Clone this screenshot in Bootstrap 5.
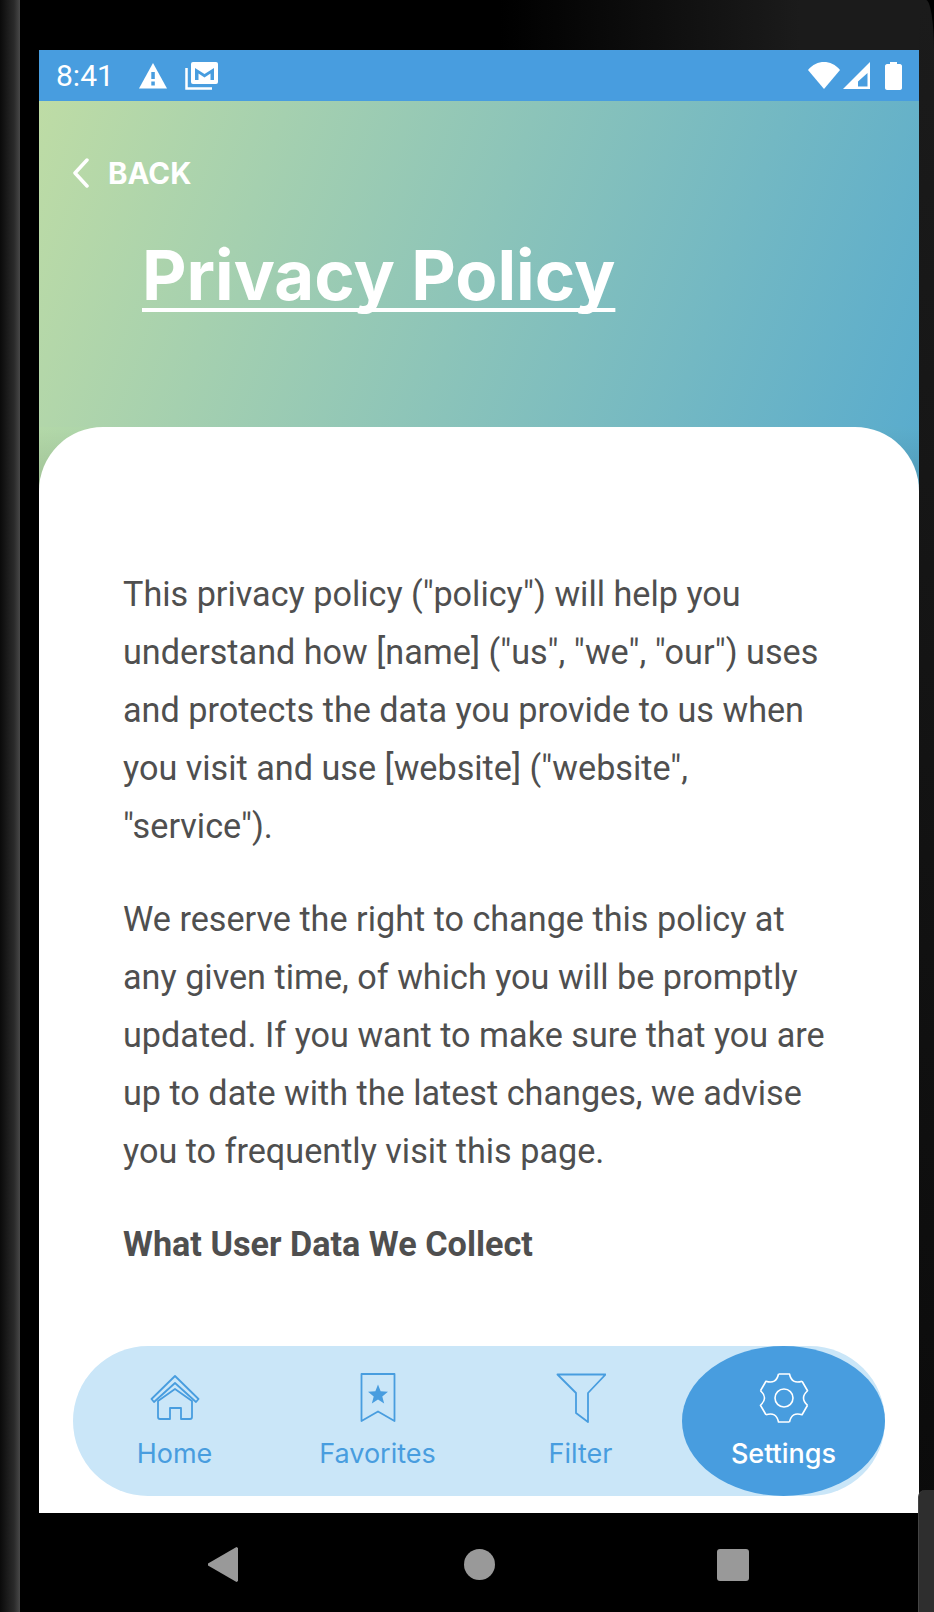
<!DOCTYPE html>
<html lang="en">
<head>
    <meta charset="UTF-8">
    <meta name="viewport" content="width=device-width, initial-scale=1.0">
    <link href="https://cdn.jsdelivr.net/npm/bootstrap@5.3.2/dist/css/bootstrap.min.css" rel="stylesheet">
    <title>Privacy Policy</title>
    <style>
        html, body { height: 100%; margin: 0; background: #000; overflow: hidden; }
        .phone-frame {
            position: relative; width: 934px; height: 1612px; padding-left: 20px;
            background: linear-gradient(90deg, #0a0a0a 0, #2a2a2a 14px, #484848 20px, #000 20px);
        }
        .phone-inner {
            width: 914px; height: 1612px; padding: 50px 15px 0 19px;
            border-radius: 6px 8px 0 0 / 50px 50px 0 0;
            background:
                linear-gradient(#000, #000) left bottom / 100% 99px no-repeat,
                linear-gradient(#1b1b1b, #0a0a0a) right top / 15px 100% no-repeat,
                linear-gradient(90deg, #000 480px, #1b1b1b 780px);
        }
        .side-button {
            position: absolute; right: 0; top: 1490px; width: 16px; height: 122px;
            background: #2e2e2e; border-left: 1px solid #444; border-radius: 7px 0 0 0;
        }
        .app-screen {
            width: 880px; height: 1463px;
            background:
                linear-gradient(180deg, rgba(0,0,0,0) 378px, rgba(0,0,0,.13) 450px),
                linear-gradient(90deg, #b3d8a8, #5aaccc);
        }
        .status-row { height: 51px; background: #489ddf; color: #fff; padding: 0 17px; font: 400 30px Roboto, sans-serif; }
        .status-warn { margin-left: 25px; }
        .status-mail { margin-left: 18px; }
        .status-signal { margin-left: 3px; }
        .status-battery { margin-left: 15px; }
        .top-area {
            height: 326px; padding: 54px 33px 0;
            background: linear-gradient(110deg, #bedca5, #5aaccd);
        }
        .back-link { color: #fff; font: 700 29.5px Inter, sans-serif; text-decoration: none; gap: 18px; }
        .back-link:hover { color: #fff; }
        .page-title {
            color: #fff; font: 700 68.8px/1 Inter, sans-serif; margin: 50px 0 0 70px;
            text-decoration: underline; text-decoration-thickness: 4px; text-underline-offset: 8px; text-decoration-skip-ink: none;
        }
        .sheet { height: 1086px; background: #fff; border-radius: 64px 64px 0 0; padding: 138px 34px 17px; }
        .policy-text { color: #4f4f4f; font: 400 34.2px/58px Roboto, sans-serif; margin: 0 50px 35px; }
        .policy-head { font-weight: 700; }
        .tab-pill { height: 150px; width: 812px; background: #cae6f8; border-radius: 75px; }
        .tab-item { width: 203px; height: 150px; color: #489ddf; font: 400 27px/34px Inter, sans-serif; border-radius: 50%; padding-top: 27px; }
        .tab-icon { height: 50px; margin-bottom: 14px; }
        .tab-icon svg { display: block; }
        .tab-active { background: #489ddf; color: #fff; font-weight: 500; }
        .softkeys { height: 99px; padding-top: 4px; }
        .softkey-back { margin-left: 168px; }
        .softkey-home { margin-left: 225px; }
        .softkey-recent { margin-left: 222px; }
    </style>
</head>
<body>
    <div class="phone-frame">
        <div class="phone-inner">
            <div class="app-screen d-flex flex-column">
                <div class="status-row d-flex align-items-center">
                    <span>8:41</span>
                    <svg class="status-warn" width="28" height="26" viewBox="0 0 28 26"><path fill="#fff" d="M14 0 28 25.500H0Z"/><rect x="12.300" y="9" width="3.500" height="7" fill="#489ddf"/><rect x="12.300" y="18.500" width="3.500" height="4" fill="#489ddf"/></svg>
                    <svg class="status-mail" width="33" height="28" viewBox="0 0 33 28"><path fill="none" stroke="#fff" stroke-width="2.500" d="M1.500 6V26.500H27"/><rect x="6" y="0" width="27" height="22" rx="2" fill="#fff"/><path fill="#489ddf" d="M10 6 19.500 12 29 6V18H25.500V11.500L19.500 15.500 13.500 11.500V18H10Z"/></svg>
                    <svg class="ms-auto" width="32" height="27" viewBox="0 0 32 27"><path fill="#fff" d="M0 8C9-2.600 23-2.600 32 8L16 27Z"/></svg>
                    <svg class="status-signal" width="27" height="27" viewBox="0 0 27 27"><path fill="#fff" d="M27 0V27H0ZM24.500 11 15 19.500V24.500H24.500Z"/></svg>
                    <svg class="status-battery" width="17" height="28" viewBox="0 0 17 28"><path fill="#fff" d="M5 0H12V2H15C16 2 17 3 17 4V26C17 27 16 28 15 28H2C1 28 0 27 0 26V4C0 3 1 2 2 2H5Z"/></svg>
                </div>
                <div class="top-area">
                    <a href="#" class="back-link d-flex align-items-center">
                        <svg width="18" height="30" viewBox="0 0 18 30"><path fill="none" stroke="#fff" stroke-width="3.500" stroke-linecap="round" stroke-linejoin="round" d="M15 2 3 15 15 28"/></svg>
                        BACK
                    </a>
                    <h1 class="page-title">Privacy Policy</h1>
                </div>
                <div class="sheet d-flex flex-column">
                    <p class="policy-text">This privacy policy ("policy") will help you understand how [name] ("us", "we", "our") uses and protects the data you provide to us when you visit and use [website] ("website", "service").</p>
                    <p class="policy-text">We reserve the right to change this policy at any given time, of which you will be promptly updated. If you want to make sure that you are up to date with the latest changes, we advise you to frequently visit this page.</p>
                    <p class="policy-text policy-head">What User Data We Collect</p>
                    <div class="tab-pill d-flex mt-auto">
                        <div class="tab-item d-flex flex-column align-items-center">
                            <div class="tab-icon d-flex align-items-center">
                                <svg width="50" height="46" viewBox="0 0 50 46" fill="none" stroke="currentColor" stroke-width="1.800" stroke-linejoin="round"><path d="M25 1 1.500 24 4 27 25 8 46 27 48.500 24Z"/><path d="M8 26V42A2 2 0 0 0 10 44H20V33H31V44H40A2 2 0 0 0 42 42V26L25 14Z"/></svg>
                            </div>
                            Home
                        </div>
                        <div class="tab-item d-flex flex-column align-items-center">
                            <div class="tab-icon d-flex align-items-center">
                                <svg width="36" height="50" viewBox="0 0 36 50" fill="none" stroke="currentColor" stroke-width="1.800" stroke-linejoin="round"><path d="M1.500 1H34.500V48L18 38.500 1.500 48Z"/><path fill="currentColor" stroke="none" d="M18 11.500 20.650 18.360 27.990 18.760 22.280 23.390 24.170 30.490 18 26.500 11.830 30.490 13.720 23.390 8.010 18.760 15.350 18.360Z"/></svg>
                            </div>
                            Favorites
                        </div>
                        <div class="tab-item d-flex flex-column align-items-center">
                            <div class="tab-icon d-flex align-items-center">
                                <svg width="50" height="50" viewBox="0 0 50 50" fill="none" stroke="currentColor" stroke-width="1.800" stroke-linejoin="round"><path d="M1.500 1.500H49.500L32 20V49L20 40V20Z"/></svg>
                            </div>
                            Filter
                        </div>
                        <div class="tab-item tab-active d-flex flex-column align-items-center">
                            <div class="tab-icon d-flex align-items-center">
                                <svg width="50" height="50" viewBox="0 0 50 50" fill="none" stroke="currentColor" stroke-width="1.600" stroke-linejoin="round">
                                    <circle cx="25" cy="25" r="9"/>
                                    <g transform="translate(25 25)">
                                        <path d="M-5.500-24H5.500Q7.730-13.400 18.030-16.760"/>
                                        <path transform="rotate(60)" d="M-5.500-24H5.500Q7.730-13.400 18.030-16.760"/>
                                        <path transform="rotate(120)" d="M-5.500-24H5.500Q7.730-13.400 18.030-16.760"/>
                                        <path transform="rotate(180)" d="M-5.500-24H5.500Q7.730-13.400 18.030-16.760"/>
                                        <path transform="rotate(240)" d="M-5.500-24H5.500Q7.730-13.400 18.030-16.760"/>
                                        <path transform="rotate(300)" d="M-5.500-24H5.500Q7.730-13.400 18.030-16.760"/>
                                    </g>
                                </svg>
                            </div>
                            Settings
                        </div>
                    </div>
                </div>
            </div>
            <div class="softkeys d-flex align-items-center">
                <svg class="softkey-back" width="32" height="35" viewBox="0 0 32 35"><path fill="#999" d="M29.500 0 31 1V34L29.500 35 1 18.500V16.500Z"/></svg>
                <svg class="softkey-home" width="31" height="31" viewBox="0 0 31 31"><circle cx="15.500" cy="15.500" r="15.500" fill="#999"/></svg>
                <svg class="softkey-recent" width="32" height="32" viewBox="0 0 32 32"><rect width="32" height="32" rx="3" fill="#999"/></svg>
            </div>
        </div>
        <span class="side-button"></span>
    </div>
    <script src="https://cdn.jsdelivr.net/npm/bootstrap@5.3.2/dist/js/bootstrap.bundle.min.js"></script>
</body>
</html>
